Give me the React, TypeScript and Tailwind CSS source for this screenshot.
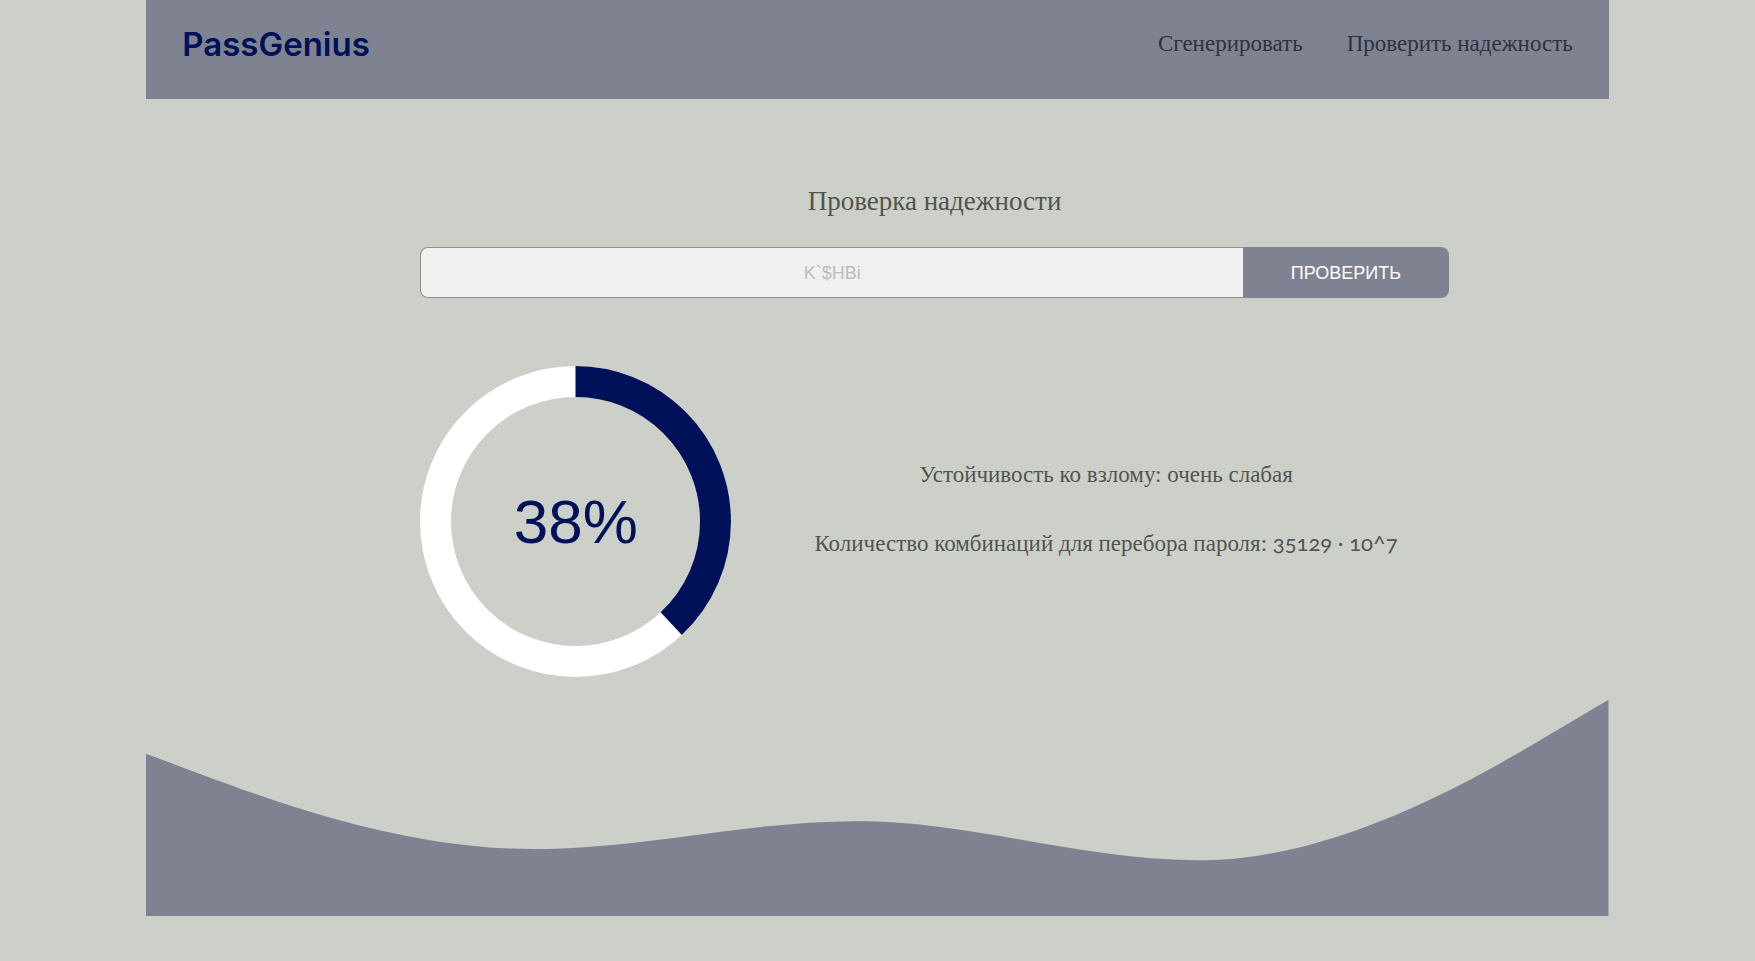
import { useState } from 'react';

const SCORE = 38;
const RADIUS = 140;
const CIRCUMFERENCE = 2 * Math.PI * RADIUS;

function Header() {
  return (
    <header className="flex h-[99px] items-start justify-between bg-[#7f8391] px-9 pt-5">
      <a href="#" className="font-[Inter,sans-serif] text-[33px] leading-12 font-semibold text-[#00115a]">
        PassGenius
      </a>
      <nav className="flex gap-11 text-[23px] leading-12 text-[#2f323c]">
        <a href="#generate">Сгенерировать</a>
        <a href="#check">Проверить надежность</a>
      </nav>
    </header>
  );
}

function ScoreRing() {
  return (
    <div className="grid size-[311px] shrink-0 place-items-center">
      <svg viewBox="0 0 311 311" className="col-start-1 row-start-1 size-full" aria-hidden="true">
        <circle cx="155.5" cy="155.5" r={RADIUS} fill="none" stroke="#ffffff" strokeWidth="31" />
        <circle
          cx="155.5"
          cy="155.5"
          r={RADIUS}
          fill="none"
          stroke="#00115a"
          strokeWidth="31"
          strokeDasharray={`${(CIRCUMFERENCE * SCORE) / 100} ${CIRCUMFERENCE}`}
          transform="rotate(-90 155.5 155.5)"
        />
      </svg>
      <span className="col-start-1 row-start-1 font-['Liberation_Sans',sans-serif] text-[62px] leading-none text-[#00115a]">
        {SCORE}%
      </span>
    </div>
  );
}

function Wave() {
  return (
    <svg viewBox="0 106 1440 214" className="mt-[22px] block w-full" aria-hidden="true">
      <path
        fill="#7f8391"
        d="M0,160L60,182.2C120,204.4,240,248.9,360,253.3C480,257.8,600,222.2,720,226.7C840,231.1,960,275.6,1080,262.2C1200,248.9,1320,177.8,1380,142.2L1440,106.7L1440,320L0,320Z"
      />
    </svg>
  );
}

export default function App() {
  const [password, setPassword] = useState('');

  return (
    <div className="min-h-screen bg-[#cdd0c9] font-['Liberation_Serif',serif]">
      <div className="mx-auto w-5/6">
        <Header />
        <main className="pt-20 pr-40 pl-[274px] text-[#51544f]">
          <h1 className="text-center text-[27px] leading-11">Проверка надежности</h1>
          <form
            className="mt-6 flex h-[51px] font-['Liberation_Sans',sans-serif] text-lg"
            onSubmit={(event) => event.preventDefault()}
          >
            <input
              type="text"
              aria-label="Пароль"
              placeholder="K`$HBi"
              value={password}
              onChange={(event) => setPassword(event.target.value)}
              className="w-4/5 rounded-l-lg border border-r-0 border-[#8f918f] bg-[#f0f0f0] text-center text-[#51544f] outline-none placeholder:text-[#bcbcbc]"
            />
            <button type="submit" className="w-1/5 rounded-r-lg bg-[#7f8391] text-white">
              ПРОВЕРИТЬ
            </button>
          </form>
          <section className="mt-[68px] flex items-center gap-8">
            <ScoreRing />
            <div className="flex flex-1 flex-col gap-9 pb-6 text-center text-[23px] leading-8">
              <p>Устойчивость ко взлому: очень слабая</p>
              <p>
                Количество комбинаций для перебора пароля:{' '}
                <span className="font-[Lato,sans-serif] text-[22px] oldstyle-nums">35129 · 10^7</span>
              </p>
            </div>
          </section>
        </main>
        <Wave />
      </div>
    </div>
  );
}
